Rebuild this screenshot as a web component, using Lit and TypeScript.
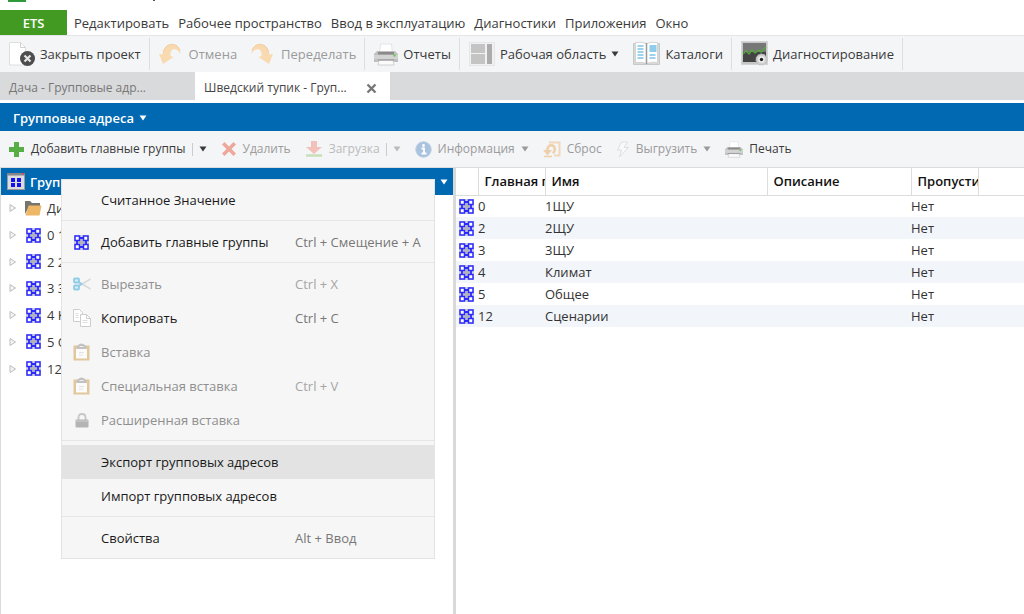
import { LitElement, html, css, svg, nothing } from "lit";
import { customElement, state } from "lit/decorators.js";

const icon = (w: number, h: number, body: unknown, vb = `0 0 ${w} ${h}`) =>
  html`<svg class="ico" width=${w} height=${h} viewBox=${vb} aria-hidden="true">${body}</svg>`;

const groupIcon = () => icon(15, 15, svg`
  <rect width="15" height="15" fill="#d2d2d8"/>
  <path d="M7.500 4v7M4 7.500h7" stroke="#b4b4b8" stroke-width="2"/>
  <path d="M6 3h3M6 12h3M3 6v3M12 6v3" stroke="#2b2bff" stroke-width="1.800"/>
  <g fill="#fff" stroke="#2b2bff" stroke-width="1.500">
    <rect x="1" y="1" width="4.500" height="4.500"/><rect x="9.500" y="1" width="4.500" height="4.500"/>
    <rect x="1" y="9.500" width="4.500" height="4.500"/><rect x="9.500" y="9.500" width="4.500" height="4.500"/>
  </g>`);

const rootIcon = () => icon(18, 17, svg`
  <rect x=".5" y=".5" width="17" height="16" fill="#dcdcdc" stroke="#9a9aa0"/>
  <rect width="18" height="2.500" fill="#85858b"/><rect x="15" width="2" height="1.500" fill="#d05050"/>
  <g fill="#1212f0"><rect x="4" y="5" width="4" height="4"/><rect x="10" y="5" width="4" height="4"/>
  <rect x="4" y="10" width="4" height="4"/><rect x="10" y="10" width="4" height="4"/></g>`);

const folderIcon = () => icon(18, 16, svg`
  <path d="M1 14V1h5l2 2h8v4H5z" fill="#77736d"/>
  <path d="M4.500 5.500H17.500L15.500 15.500H1.500z" fill="#edb767"/>`);

const expander = () => icon(8, 10, svg`<path d="M1 1.500v7L6.500 5z" fill="#f4f4f4" stroke="#bdbdbd"/>`);
const caret = () => icon(8, 6, svg`<path d="M.5 .5h7L4 5.500z" fill="currentColor"/>`);

const closeProject = () => icon(26, 26, svg`
  <path d="M.5 1.500h11l5 5v17.500h-16z" fill="#fff" stroke="#dedede"/>
  <path d="M11.500 1.500v5h5" fill="none" stroke="#cfcfcf"/>
  <circle cx="18.500" cy="17.500" r="7.500" fill="#4d4d4d"/>
  <path d="M15.500 14.500l6 6m0-6l-6 6" stroke="#e6e6e6" stroke-width="2.200"/>`);
const undo = () => icon(22, 22, svg`
  <path d="M0 11l3.500.5C4 5 8 1 13 1c5 0 8 4 8.500 10-2-4-5-5.500-7.500-4.500-2.500 1-3 4-2.500 6.500l3 1L4 21z" fill="#f9d9b0"/>
  <path d="M4.500 9C5.500 4.500 9 1.500 13 1.500c4 0 6.500 2 8 6" fill="none" stroke="#f3cda0"/>`);
const redo = () => icon(22, 22, svg`
  <path d="M22 11l-3.500.5C18 5 14 1 9 1 4 1 1 5 .5 11c2-4 5-5.500 7.500-4.500 2.500 1 3 4 2.500 6.500l-3 1L18 21z" fill="#f9d9b0"/>
  <path d="M17.500 9C16.500 4.500 13 1.500 9 1.500c-4 0-6.500 2-8 6" fill="none" stroke="#f3cda0"/>`);
const printer = (w: number, h: number) => icon(w, h, svg`
  <path d="M6.500 1h11l1 9h-13z" fill="#fff" stroke="#e4e4e4"/>
  <path d="M3 8h18l3 3v8H0v-8z" fill="#c0c0c0"/><path d="M4 9h16v2.500H4z" fill="#8a8a8a"/>
  <path d="M0 12h24v4H0z" fill="#d3d3d3"/><circle cx="20.500" cy="12.500" r="1.300" fill="#69cf58"/>
  <path d="M5 17h14l1 5H4z" fill="#fbfbfb" stroke="#d0d0d0"/><path d="M4 17h16" stroke="#8a8a8a"/>`, "0 0 24 23");
const layoutIcon = () => icon(26, 24, svg`
  <rect x=".5" y=".5" width="25" height="23" fill="#f1f1f1" stroke="#e6e6e6"/>
  <g fill="#c4c4c4"><rect x="2" y="2" width="14" height="9"/><rect x="2" y="12" width="14" height="10"/></g>
  <rect x="18" y="2" width="5" height="20" fill="#acacac"/>`);
const book = () => icon(27, 26, svg`
  <path d="M.5 2.500h26v21h-26z" fill="#d8d8d8" stroke="#c8c8c8"/>
  <path d="M2.500 1.500q6-1 11 1 5-2 11-1v20q-6-1-11 1-5-2-11-1z" fill="#fff" stroke="#d4d4d4"/>
  <path d="M13.500 2v21" stroke="#9a9a9a" stroke-width="1.500"/>
  <rect x="16.500" y="4" width="7" height="7" fill="#8fcdec"/>
  <path d="M4.500 5h6M4.500 8h6M4.500 11h6M4.500 14h6M4.500 17h6M16.500 14h6M16.500 17h6" stroke="#7cc3ea" stroke-width="1.500"/>`);
const diag = () => icon(27, 26, svg`
  <rect x=".5" y=".5" width="26" height="23" fill="#c6c6c6" stroke="#d4d4d4"/>
  <rect x="2" y="2" width="23" height="9" fill="#777"/><rect x="2" y="11" width="23" height="10" fill="#444"/>
  <path d="M2 13l3-3 3 3 3-4 3 3 4-3 2 2 5-5" fill="none" stroke="#55a83a" stroke-width="1.300"/>
  <circle cx="20.500" cy="18.500" r="5.500" fill="#cfcfcf" stroke="#bbb" stroke-dasharray="2 1"/>
  <circle cx="20.500" cy="18.500" r="3.300" fill="#eee"/><circle cx="20.500" cy="18.500" r="1.700" fill="#222"/>`);

const plus = () => icon(17, 17, svg`<path d="M6 1h5v5h5v5h-5v5H6v-5H1V6h5z" fill="#58ae45"/>`);
const cross = () => icon(16, 16, svg`<path d="M3.500 1L8 5.500 12.500 1 15 3.500 10.500 8l4.500 4.500-2.500 2.500L8 10.500 3.500 15 1 12.500 5.500 8 1 3.500z" fill="#eda79b"/>`);
const download = () => icon(18, 18, svg`<path d="M6 1h6v6h5l-8 7-8-7h5z" fill="#f2c1bc"/><path d="M1 15.500h16" stroke="#c9dfb8" stroke-width="2.500"/>`);
const info = () => icon(17, 17, svg`<circle cx="8.500" cy="8.500" r="7.700" fill="#a9c3df" stroke="#b8cbe0"/><circle cx="8.500" cy="4.500" r="1.400" fill="#fff"/><path d="M6.500 7.500h2.500v5M6.500 12.500h5" stroke="#fff" stroke-width="1.800" fill="none"/>`);
const reset = () => icon(18, 17, svg`
  <path d="M6 1.500h10.500v13H11" fill="none" stroke="#f1d8bb" stroke-width="2"/>
  <path d="M4.500 10C4 5.500 7 3.500 9.500 4.500S13 9 10 12.500" fill="none" stroke="#efcfaa" stroke-width="2.500"/>
  <path d="M0 9h9l-4.500 5.500z" fill="#efcfaa"/><path d="M1 15.500h8" stroke="#efcfaa" stroke-width="1.500"/>`);
const bolt = () => icon(14, 17, svg`<path d="M5.500 1L1.500 9h4L3.500 16 12.500 6.500H8L11.500 1z" fill="#fafafa" stroke="#dcdfe1"/>`);

const scissors = () => icon(18, 14, svg`
  <path d="M7.500 6L17.500 12M7.500 8L17.500 2" stroke="#dadada" stroke-width="1.800"/>
  <g fill="#d6ecf6" stroke="#8fcbe6" stroke-width="1.800"><rect x="1" y="1.500" width="5" height="4" rx="1"/><rect x="1" y="8.500" width="5" height="4" rx="1"/></g>
  <path d="M5.500 5L8.500 7 5.500 9" fill="none" stroke="#8fcbe6" stroke-width="1.800"/>`);
const copy = () => icon(18, 18, svg`
  <g fill="#fff" stroke="#cdcdcd"><path d="M.5 .5h6l3 3v9h-9z"/><path d="M7.500 5.500h6l4 4v8h-10z"/><path d="M13.500 5.500v4h4" fill="none"/></g>
  <path d="M2.500 4.500h3M2.500 6.500h3M2.500 8.500h3M9.500 11.500h5M9.500 13.500h5" stroke="#ddd"/>`);
const clipboard = () => icon(17, 18, svg`
  <rect x=".5" y="2.500" width="16" height="15" fill="#e0c79c"/><rect x="3" y="5" width="11" height="10.500" fill="#fbfbfb"/>
  <path d="M3 6l1.500-3.500q4-4 8 0L14 6z" fill="#c2c2c2"/><path d="M6.500 3.500h4" stroke="#eee"/><path d="M6 9.500h5M6 12h4" stroke="#e2e2e2"/>`);
const lock = () => icon(14, 15, svg`<path d="M3.500 7V4.500q0-3.500 3.500-3.500t3.500 3.500V7" fill="none" stroke="#c6c6c6" stroke-width="1.800"/><rect x=".5" y="6.500" width="13" height="8" rx="1" fill="#b4b4b4"/><path d="M1 8h12" stroke="#cfcfcf"/>`);

interface MenuItem { label: string; keys?: string; icon?: () => unknown; off?: boolean }

const MENU: MenuItem[][] = [
  [{ label: "Считанное Значение" }],
  [{ label: "Добавить главные группы", keys: "Ctrl + Смещение + A", icon: groupIcon }],
  [
    { label: "Вырезать", keys: "Ctrl + X", icon: scissors, off: true },
    { label: "Копировать", keys: "Ctrl + C", icon: copy },
    { label: "Вставка", icon: clipboard, off: true },
    { label: "Специальная вставка", keys: "Ctrl + V", icon: clipboard, off: true },
    { label: "Расширенная вставка", icon: lock, off: true },
  ],
  [{ label: "Экспорт групповых адресов" }, { label: "Импорт групповых адресов" }],
  [{ label: "Свойства", keys: "Alt + Ввод" }],
];

const GROUPS = [
  ["0", "1ЩУ"], ["2", "2ЩУ"], ["3", "3ЩУ"], ["4", "Климат"], ["5", "Общее"], ["12", "Сценарии"],
];

@customElement("app-root")
export class AppRoot extends LitElement {
  @state() private active = "Экспорт групповых адресов";

  static styles = css`
    :host { display: flex; flex-direction: column; height: 100vh; overflow: hidden; background: #fff;
      color: #3a3a3a; font: 13px/18px "Open Sans", "Noto Sans", sans-serif; }
    * { box-sizing: border-box; }
    button { font: inherit; color: inherit; background: none; border: 0; padding: 0; margin: 0; white-space: nowrap; }
    .ico { display: block; flex: none; }
    .title { height: 10px; flex: none; display: flex; gap: 127px; padding-left: 8px; }
    .logo { width: 18px; height: 2px; background: #2f9a3c; }
    .mark { width: 2px; height: 1px; background: #555; }
    .menubar { display: flex; align-items: stretch; height: 26px; flex: none; border-bottom: 1px solid #e4e5e7; }
    .ets { width: 67px; background: #429a22; color: #fff; font-weight: 600; }
    .menus { display: flex; align-items: center; gap: 9px; padding-left: 7px; padding-top: 1px; }
    .ribbon { display: flex; align-items: center; height: 36px; flex: none; background: #f4f5f7; }
    .set { display: flex; align-items: center; height: 32px; padding: 0 8px 0 9px; gap: 14px; border-right: 1px solid #dcdee0; }
    .tool { display: flex; align-items: center; gap: 5px; }
    .wide { gap: 8px; }
    .off { color: #9b9b9b; }
    .faint { color: #bbb; }
    .tabs { display: flex; height: 28px; flex: none; background: #d9dadc; font-size: 12px; }
    .tab { display: flex; align-items: center; width: 195px; padding: 4px 9px 0; color: #777; }
    .tab.on { background: #fff; color: #444; padding-right: 13px; justify-content: space-between; }
    .cap { display: flex; align-items: center; height: 28px; flex: none; margin-top: 3px; padding: 2px 13px 0; gap: 5px;
      background: #0069b1; color: #fff; font-weight: 600; }
    .actions { display: flex; align-items: center; height: 37px; flex: none; background: #f4f5f7;
      border-bottom: 1px solid #dcdcdc; padding-left: 8px; gap: 14px; font-size: 12px; }
    .actions .tool { gap: 6px; }
    .bar { width: 1px; height: 13px; background: #ccc; }
    .body { display: flex; flex: 1; min-height: 0; position: relative; }
    .tree { width: 456px; flex: none; border-left: 1px solid #d9dadc; border-right: 3px solid #d9d9d9; }
    .root { display: flex; align-items: center; width: 100%; height: 27px; background: #0069b1; color: #fff; padding: 0 5px 0 6px; gap: 5px; font-weight: 600; }
    .grow { flex: 1; text-align: left; }
    ul { list-style: none; margin: 0; padding: 0; height: 187px; display: grid; grid-auto-rows: 1fr; }
    li, .node { display: flex; align-items: center; }
    li { padding-left: 8px; gap: 7px; }
    .node { gap: 5px; }
    .slot { width: 18px; display: flex; justify-content: center; }
    .list { flex: 1; min-width: 0; overflow: hidden; }
    table { width: 100%; border-collapse: collapse; table-layout: fixed; color: #333; }
    th { height: 27px; padding: 0 0 0 6px; text-align: left; font-weight: 600; color: #111; overflow: hidden;
      white-space: nowrap; border-bottom: 1px solid #dcdcdc; border-right: 1px solid #dcdcdc; }
    th:last-child { border-right: 0; }
    td { height: 22px; padding: 0; white-space: nowrap; }
    tbody tr:nth-child(even) { background: #f2f6fa; }
    td .ico { margin-left: 3px; }
    .c0 { width: 22px; } .c1 { width: 67px; } .c2 { width: 222px; } .c3 { width: 144px; } .c4 { width: 67px; }
    .popup { position: absolute; left: 61px; top: 11px; width: 374px; padding: 3px 0; background: #f6f6f6;
      border: 1px solid #e4e4e4; color: #1a1a1a; }
    .group + .group { border-top: 1px solid #e6e6e6; margin-top: 3px; padding-top: 4px; }
    .item { display: grid; grid-template-columns: 39px 194px 1fr; align-items: center; width: 100%; height: 34px; text-align: left; }
    .item .ico { margin: 0 auto; }
    .item.hot { background: #e3e3e3; }
    .item:disabled { color: #8f8f8f; }
    .keys { color: #777; }
    .item:disabled .keys { color: #a5a5a5; }
  `;

  private item(m: MenuItem) {
    return html`<button role="menuitem" class="item ${m.label === this.active ? "hot" : ""}" ?disabled=${m.off}
      @mouseenter=${() => { this.active = m.label; }}>
      <span>${m.icon ? m.icon() : nothing}</span><span>${m.label}</span><span class="keys">${m.keys ?? nothing}</span>
    </button>`;
  }

  render() {
    return html`
      <div class="title"><div class="logo"></div><div class="mark"></div></div>
      <nav class="menubar">
        <button class="ets">ETS</button>
        <div class="menus">
          ${["Редактировать", "Рабочее пространство", "Ввод в эксплуатацию", "Диагностики", "Приложения", "Окно"].map(
            (t) => html`<button>${t}</button>`)}
        </div>
      </nav>
      <div class="ribbon">
        <div class="set"><button class="tool">${closeProject()}Закрыть проект</button></div>
        <div class="set"><button class="tool wide off">${undo()}Отмена</button><button class="tool wide off">${redo()}Переделать</button></div>
        <div class="set"><button class="tool">${printer(24, 23)}Отчеты</button></div>
        <div class="set"><button class="tool">${layoutIcon()}Рабочая область ${caret()}</button><button class="tool">${book()}Каталоги</button></div>
        <div class="set"><button class="tool">${diag()}Диагностирование</button></div>
      </div>
      <div class="tabs" role="tablist">
        <button class="tab" role="tab">Дача - Групповые адр...</button>
        <button class="tab on" role="tab"><span>Шведский тупик - Груп...</span>
          ${icon(11, 11, svg`<path d="M1.500 1.500l8 8m0-8l-8 8" stroke="#777" stroke-width="2.400"/>`)}</button>
      </div>
      <div class="cap">Групповые адреса ${caret()}</div>
      <div class="actions">
        <button class="tool">${plus()}Добавить главные группы<span class="bar"></span>${caret()}</button>
        <button class="tool off">${cross()}Удалить</button>
        <button class="tool faint">${download()}Загрузка<span class="bar"></span>${caret()}</button>
        <button class="tool off">${info()}Информация ${caret()}</button>
        <button class="tool off">${reset()}Сброс</button>
        <button class="tool off">${bolt()}Выгрузить ${caret()}</button>
        <button class="tool">${printer(18, 17)}Печать</button>
      </div>
      <main class="body">
        <section class="tree">
          <button class="root">${rootIcon()}<span class="grow">Групповые адреса</span>${caret()}</button>
          <ul>
            <li>${expander()}<button class="node"><span class="slot">${folderIcon()}</span>Динамические папки</button></li>
            ${GROUPS.map(([n, t]) => html`<li>${expander()}<button class="node"><span class="slot">${groupIcon()}</span>${n} ${t}</button></li>`)}
          </ul>
        </section>
        <section class="list">
          <table>
            <thead><tr><th class="c0"></th><th class="c1">Главная группа</th><th class="c2">Имя</th><th class="c3">Описание</th><th class="c4">Пропустить</th><th></th></tr></thead>
            <tbody>${GROUPS.map(([n, t]) => html`<tr><td>${groupIcon()}</td><td>${n}</td><td>${t}</td><td></td><td>Нет</td><td></td></tr>`)}</tbody>
          </table>
        </section>
        <div class="popup" role="menu">${MENU.map((g) => html`<div class="group">${g.map((m) => this.item(m))}</div>`)}</div>
      </main>`;
  }
}
